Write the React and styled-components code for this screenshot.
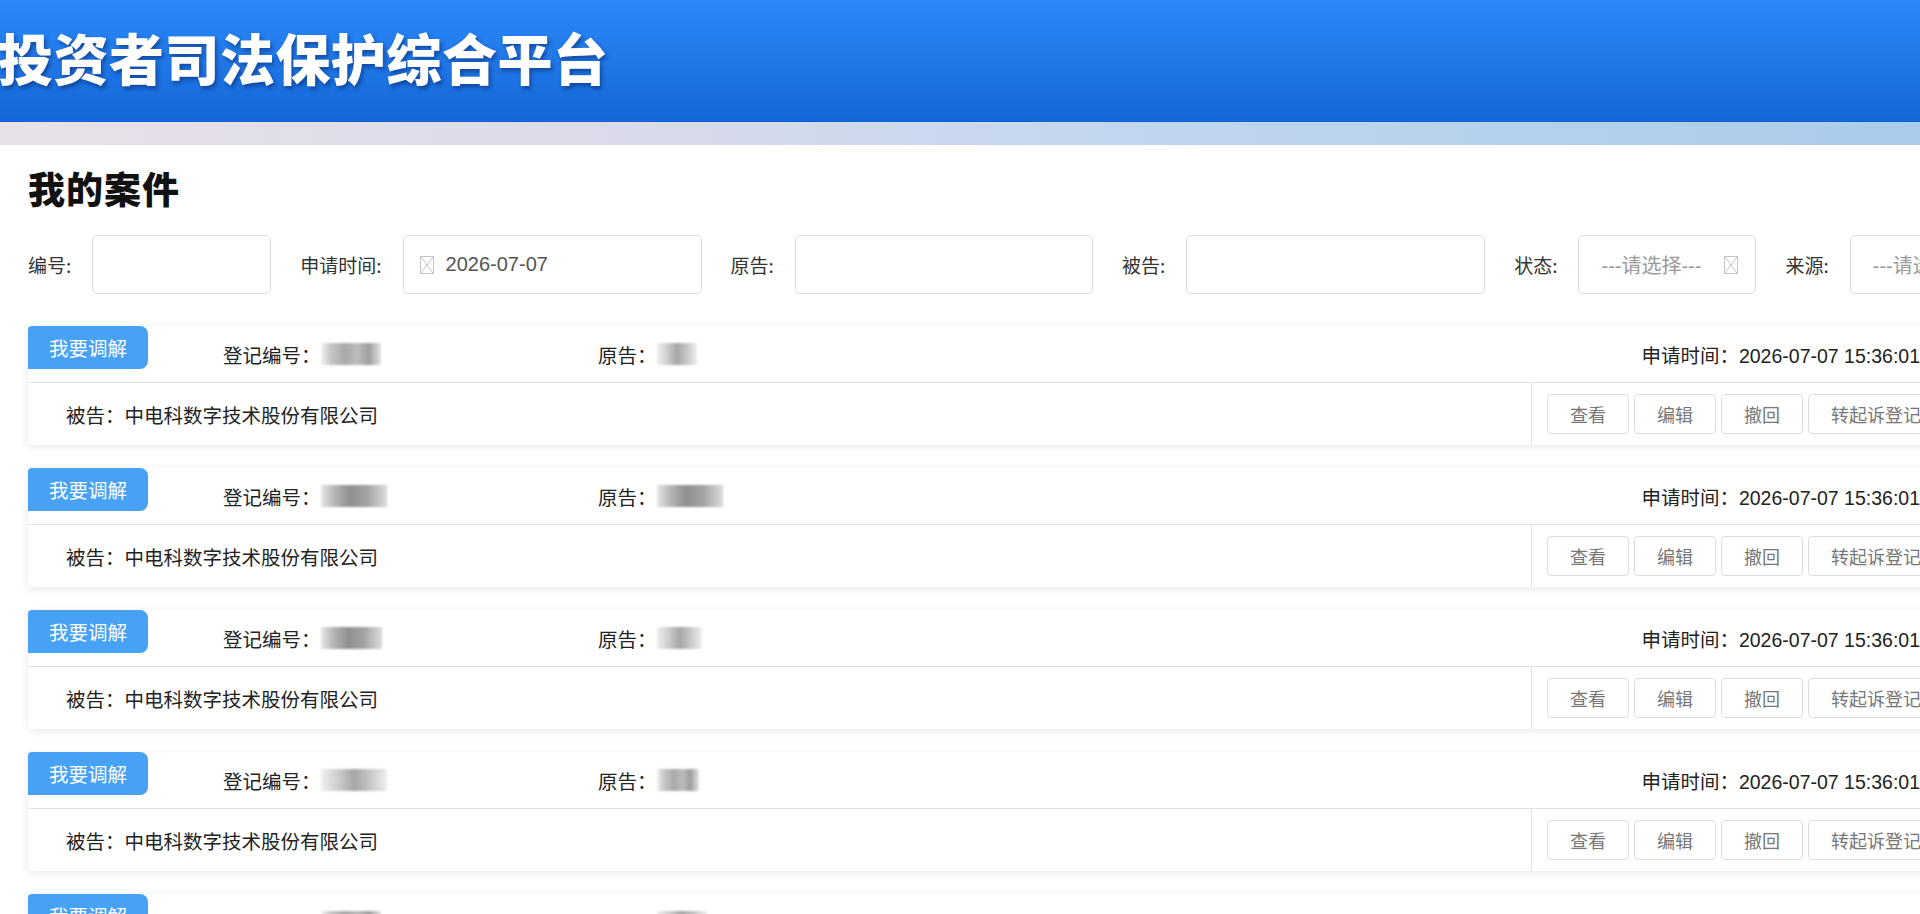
import React from 'react';
import styled, { createGlobalStyle } from 'styled-components';

const GlobalStyle = createGlobalStyle`
  html, body {
    margin: 0;
    padding: 0;
    overflow: hidden;
    background: #fff;
  }
  body {
    font-family: "Liberation Sans", "Noto Sans CJK SC", sans-serif;
    color: #222;
  }
`

const Page = styled.div`
  width: 1920px;
  height: 914px;
  overflow: hidden;
`

const Header = styled.header`
  height: 122px;
  display: flex;
  align-items: center;
  background: linear-gradient(180deg, #2a89fc 0%, #217ae9 45%, #1467d8 100%);
  border-bottom: 1px solid #1160cc;
  box-sizing: border-box;
`
const HeaderTitle = styled.h1`
  margin: 0 0 8px -2px;
  font-family: "Noto Sans CJK SC", sans-serif;
  font-size: 55px;
  font-weight: 900;
  letter-spacing: 0.5px;
  line-height: 1;
  color: #fff;
  text-shadow: 2px 3px 4px rgba(0, 20, 80, 0.45);
`
const Strip = styled.div`
  height: 23px;
  background: linear-gradient(90deg, #e8e1e9 0%, #dcdbea 30%, #c0d6ef 60%, #aacbeb 100%);
`

const Main = styled.main`
  padding-left: 28px;
`
const PageTitle = styled.h2`
  margin: 21px 0 0 0;
  font-family: "Noto Sans CJK SC", sans-serif;
  font-size: 37px;
  line-height: 44px;
  font-weight: 900;
  letter-spacing: 1px;
  color: #111;
`

const FilterRow = styled.div`
  margin-top: 25px;
  display: flex;
  align-items: center;
  gap: 29px;
  white-space: nowrap;
`
const FilterItem = styled.div`
  display: flex;
  align-items: center;
  gap: 21px;
`
const FilterLabel = styled.span`
  font-family: "Noto Sans CJK SC", sans-serif;
  font-size: 19px;
  color: #333;
`
const FilterBox = styled.div`
  width: ${p => p.$w}px;
  height: 59px;
  box-sizing: border-box;
  border: 1px solid #dcdcdc;
  border-radius: 5px;
  display: flex;
  align-items: center;
  justify-content: ${p => (p.$placeholder ? 'space-between' : 'flex-start')};
  gap: 12px;
  padding: ${p => (p.$placeholder ? '0 17px 0 22px' : '0 16px')};
  flex-shrink: 0;
  font-size: 20px;
  color: ${p => (p.$placeholder ? '#9a9a9a' : '#555')};
`
const BoxText = styled.span`
  white-space: nowrap;
`

const BrokenIcon = () => (
  <svg width="14" height="18" viewBox="0 0 14 18" style={{ flexShrink: 0 }}>
    <rect x="0.5" y="0.5" width="13" height="17" fill="none" stroke="#c4c4c4" />
    <path d="M1 1 L13 17 M13 1 L1 17" stroke="#c4c4c4" strokeWidth="1" />
  </svg>
)

const CardList = styled.div`
  margin-top: 32px;
  display: flex;
  flex-direction: column;
  gap: 23px;
`
const Card = styled.div`
  width: 1912px;
  background: #fff;
  border-radius: 4px;
  box-shadow: 0 2px 10px rgba(0, 0, 0, 0.09);
  flex-shrink: 0;
`
const TopRow = styled.div`
  height: 57px;
  box-sizing: border-box;
  display: flex;
  align-items: center;
  padding-right: 20px;
  border-bottom: 1px solid #e2e2e2;
  font-size: 19.5px;
  white-space: nowrap;
`
const Badge = styled.div`
  align-self: flex-start;
  width: 120px;
  height: 43px;
  display: flex;
  align-items: center;
  justify-content: center;
  background: #47a1f4;
  color: #fff;
  border-radius: 4px 8px 8px 0;
  font-family: "Noto Sans CJK SC", sans-serif;
  font-size: 19.5px;
`
const Field = styled.div`
  display: flex;
  align-items: center;
  width: ${p => (p.$w ? `${p.$w}px` : 'auto')};
  margin-left: ${p => p.$ml || 0}px;
  flex-shrink: 0;
  color: #222;
`
const Spacer = styled.div`
  flex: 1;
`
const Masked = styled.span`
  display: inline-block;
  width: ${p => p.$w}px;
  height: 22px;
  background: ${p => p.$bg};
  filter: blur(1.2px);
`

const BottomRow = styled.div`
  height: 62px;
  display: flex;
  align-items: stretch;
`
const Defendant = styled.div`
  flex: 1;
  display: flex;
  align-items: center;
  padding-left: 38px;
  font-size: 19.5px;
  color: #222;
`
const Actions = styled.div`
  width: 409px;
  box-sizing: border-box;
  border-left: 1px solid #e2e2e2;
  padding-left: 15px;
  display: flex;
  align-items: center;
  gap: 5px;
`
const ActionButton = styled.button`
  height: 40px;
  padding: 0 22px;
  background: #fff;
  border: 1px solid #dedede;
  border-radius: 4px;
  font-family: "Noto Sans CJK SC", sans-serif;
  font-size: 18px;
  color: #777;
  white-space: nowrap;
  flex-shrink: 0;
  cursor: pointer;
`

const maskA = 'linear-gradient(90deg, #f2f2f2 0%, #c9c9c9 15%, #a9a9a9 40%, #bdbdbd 60%, #9f9f9f 80%, #e6e6e6 100%)';
const maskB = 'linear-gradient(90deg, #e8e8e8 0%, #b5b5b5 20%, #8f8f8f 45%, #a3a3a3 70%, #dcdcdc 100%)';
const maskC = 'linear-gradient(90deg, #efefef 0%, #cfcfcf 25%, #a6a6a6 50%, #c8c8c8 75%, #f0f0f0 100%)';

const cases = [
  { noW: 60, noBg: maskA, plW: 40, plBg: maskC },
  { noW: 66, noBg: maskB, plW: 66, plBg: maskB },
  { noW: 61, noBg: maskB, plW: 45, plBg: maskC },
  { noW: 66, noBg: maskC, plW: 42, plBg: maskA },
  { noW: 60, noBg: maskA, plW: 50, plBg: maskC },
];

const CaseCard = ({ item }) => (
  <Card>
    <TopRow>
      <Badge>我要调解</Badge>
      <Field $ml={75} $w={375}>
        登记编号：<Masked $w={item.noW} $bg={item.noBg} />
      </Field>
      <Field>
        原告：<Masked $w={item.plW} $bg={item.plBg} />
      </Field>
      <Spacer />
      <Field>申请时间：2026-07-07 15:36:01</Field>
    </TopRow>
    <BottomRow>
      <Defendant>被告：中电科数字技术股份有限公司</Defendant>
      <Actions>
        <ActionButton>查看</ActionButton>
        <ActionButton>编辑</ActionButton>
        <ActionButton>撤回</ActionButton>
        <ActionButton>转起诉登记</ActionButton>
      </Actions>
    </BottomRow>
  </Card>
)

export default function App() {
  return (
    <Page>
      <GlobalStyle />
      <Header>
        <HeaderTitle>投资者司法保护综合平台</HeaderTitle>
      </Header>
      <Strip />
      <Main>
        <PageTitle>我的案件</PageTitle>
        <FilterRow>
          <FilterItem>
            <FilterLabel>编号:</FilterLabel>
            <FilterBox $w={179} />
          </FilterItem>
          <FilterItem>
            <FilterLabel>申请时间:</FilterLabel>
            <FilterBox $w={299}>
              <BrokenIcon />
              <BoxText>2026-07-07</BoxText>
            </FilterBox>
          </FilterItem>
          <FilterItem>
            <FilterLabel>原告:</FilterLabel>
            <FilterBox $w={298} />
          </FilterItem>
          <FilterItem>
            <FilterLabel>被告:</FilterLabel>
            <FilterBox $w={299} />
          </FilterItem>
          <FilterItem>
            <FilterLabel>状态:</FilterLabel>
            <FilterBox $w={178} $placeholder>
              <BoxText>---请选择---</BoxText>
              <BrokenIcon />
            </FilterBox>
          </FilterItem>
          <FilterItem>
            <FilterLabel>来源:</FilterLabel>
            <FilterBox $w={178} $placeholder>
              <BoxText>---请选择---</BoxText>
              <BrokenIcon />
            </FilterBox>
          </FilterItem>
        </FilterRow>
        <CardList>
          {cases.map((item, i) => (
            <CaseCard key={i} item={item} />
          ))}
        </CardList>
      </Main>
    </Page>
  )
}
